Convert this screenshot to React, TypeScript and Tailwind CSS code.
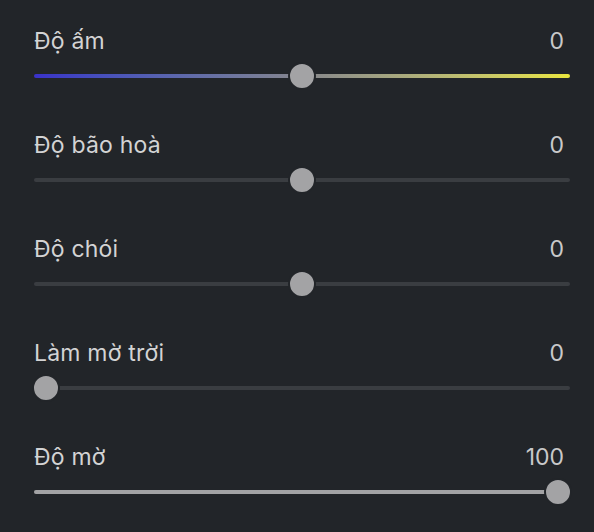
import React from "react";

type Adjustment = {
  label: string;
  value: number;
  min: number;
  max: number;
  gradient?: boolean;
};

const adjustments: Adjustment[] = [
  { label: "Độ ấm", value: 0, min: -100, max: 100, gradient: true },
  { label: "Độ bão hoà", value: 0, min: -100, max: 100 },
  { label: "Độ chói", value: 0, min: -100, max: 100 },
  { label: "Làm mờ trời", value: 0, min: 0, max: 100 },
  { label: "Độ mờ", value: 100, min: 0, max: 100 },
];

function Slider({ value, min, max, gradient }: Adjustment) {
  const pct = ((value - min) / (max - min)) * 100;
  const bipolar = min < 0;

  return (
    <div className="relative h-[28px] flex items-center">
      {gradient ? (
        <div className="h-[4px] w-full rounded-full bg-linear-to-r from-[#3a31c9] via-[#86868c] to-[#e9e53c]" />
      ) : (
        <div className="relative h-[4px] w-full rounded-full bg-[#3a3d41] overflow-hidden">
          {!bipolar && (
            <div
              className="absolute left-0 top-0 h-full bg-[#a3a3a5]"
              style={{ width: `calc(12px + (100% - 24px) * ${pct / 100})` }}
            />
          )}
        </div>
      )}
      <div
        className="absolute top-1/2 -translate-y-1/2 -translate-x-1/2 w-[28px] h-[28px] rounded-full border-2 border-[#222529] bg-[#a3a3a5]"
        style={{ left: `calc(12px + (100% - 24px) * ${pct / 100})` }}
      />
    </div>
  );
}

export default function App() {
  return (
    <div
      className="w-[594px] h-[532px] bg-[#222529] pt-[27px] pl-[34px] pr-[24px] overflow-hidden"
      style={{ fontFamily: "Inter, 'Noto Sans', sans-serif" }}
    >
      {adjustments.map((a) => (
        <div key={a.label} className="h-[104px] flex flex-col">
          <div className="flex items-center justify-between h-[28px] pr-[6px] text-[23px] leading-[28px] text-[#d3d3d4]">
            <span className="tracking-[0.2px]">{a.label}</span>
            <span className="text-[#c9c9ca]">{a.value}</span>
          </div>
          <div className="mt-[7px]">
            <Slider {...a} />
          </div>
        </div>
      ))}
    </div>
  );
}
